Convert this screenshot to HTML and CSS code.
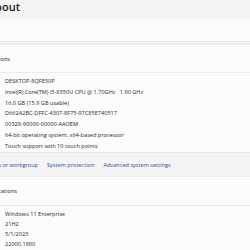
FILE: index.html
```html
<!DOCTYPE html>
<html>
<head>
<meta charset="utf-8">
<link rel="stylesheet" href="styles.css">
</head>
<body>
  <header class="page-head">
    <div class="clip clip-title"><h1 class="title">About</h1></div>
  </header>

  <section class="card card-device"></section>

  <section class="card card-specs">
    <div class="section-head">
      <div class="clip clip-specs"><span>Device specifications</span></div>
    </div>
    <div class="values device-values">
      <div>DESKTOP-8QFE30P</div>
      <div>Intel(R) Core(TM) i5-8350U CPU @ 1.70GHz&nbsp;&nbsp;&nbsp;1.90 GHz</div>
      <div>16.0 GB (15.9 GB usable)</div>
      <div>D662A2BC-DFFC-4307-8F75-97C85E740517</div>
      <div>00328-90000-00000-AAOEM</div>
      <div>64-bit operating system, x64-based processor</div>
      <div>Touch support with 10 touch points</div>
    </div>
    <nav class="related">
      <div class="clip clip-domain"><a class="link">Domain or workgroup</a></div>
      <a class="link">System protection</a>
      <a class="link">Advanced system settings</a>
    </nav>
  </section>

  <section class="card card-windows">
    <div class="section-head win-head">
      <div class="clip clip-win"><span>Windows specifications</span></div>
    </div>
    <div class="values win-values">
      <div>Windows 11 Enterprise</div>
      <div>21H2</div>
      <div>5/1/2023</div>
      <div>22000.1880</div>
    </div>
  </section>
</body>
</html>
```
FILE: styles.css
```css
html, body {
  margin: 0;
  padding: 0;
}
body {
  background: #f3f3f3;
  font-family: "Open Sans", "Noto Sans", sans-serif;
  color: #1b1b1b;
  overflow: hidden;
  width: 250px;
  height: 250px;
}

.clip {
  display: flex;
  justify-content: flex-end;
  white-space: nowrap;
}

.page-head {
  height: 19px;
  display: flex;
  align-items: flex-start;
}
.clip-title { width: 20px; }
.title {
  margin: 0;
  font-size: 11px;
  font-weight: 600;
  line-height: 14px;
  color: #1a1a1a;
}

.card {
  background: #fbfbfb;
}
.card-device {
  height: 22px;
  border-bottom: 1px solid #e9e9e9;
}
.card-specs {
  margin-top: 2px;
  border-top: 1px solid #e9e9e9;
}

.section-head {
  height: 27px;
  display: flex;
  align-items: center;
  font-size: 5.6px;
  border-bottom: 1px solid #ebebeb;
}
.clip-specs { width: 10px; }

.values {
  font-size: 5.6px;
  color: #2b2b2b;
  padding-left: 5px;
}
.device-values {
  padding-top: 3px;
  line-height: 10.8px;
  height: 76px;
}

.related {
  display: flex;
  align-items: center;
  gap: 9px;
  height: 23px;
  background: #f4f4f4;
  border-top: 1px solid #ebebeb;
  border-bottom: 1px solid #ebebeb;
  font-size: 5.6px;
}
.link {
  color: #27508f;
  white-space: nowrap;
}
.clip-domain { width: 38px; }

.card-windows {
  height: 80px;
}
.win-head {
  height: 28px;
  border-bottom: 1px solid #e6e6e6;
}
.clip-win { width: 17px; }
.win-values {
  padding-top: 3px;
  line-height: 10px;
}
```
